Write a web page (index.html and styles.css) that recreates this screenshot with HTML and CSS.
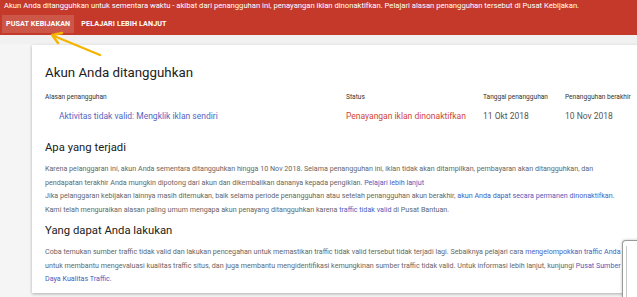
FILE: index.html
```html
<!DOCTYPE html>
<html lang="id">
<head>
<meta charset="utf-8">
<link rel="stylesheet" href="styles.css">
</head>
<body>
<header class="banner">
  <p class="banner-msg">Akun Anda ditangguhkan untuk sementara waktu - akibat dari penangguhan ini, penayangan iklan dinonaktifkan. Pelajari alasan penangguhan tersebut di Pusat Kebijakan.</p>
  <div class="banner-actions">
    <span class="banner-btn active">PUSAT KEBIJAKAN</span>
    <span class="banner-btn">PELAJARI LEBIH LANJUT</span>
  </div>
</header>
<div class="strip"></div>
<main class="page">
  <section class="card">
    <h1 class="title">Akun Anda ditangguhkan</h1>
    <div class="info">
      <div class="label">Alasan penangguhan</div>
      <div class="label">Status</div>
      <div class="label">Tanggal penangguhan</div>
      <div class="label">Penangguhan berakhir</div>
      <div class="value link indent">Aktivitas tidak valid: Mengklik iklan sendiri</div>
      <div class="value red">Penayangan iklan dinonaktifkan</div>
      <div class="value">11 Okt 2018</div>
      <div class="value">10 Nov 2018</div>
    </div>
    <h2 class="heading">Apa yang terjadi</h2>
    <p class="para">Karena pelanggaran ini, akun Anda sementara ditangguhkan hingga 10 Nov 2018. Selama penangguhan ini, iklan tidak akan ditampilkan, pembayaran akan ditangguhkan, dan<br>pendapatan terakhir Anda mungkin dipotong dari akun dan dikembalikan dananya kepada pengiklan. <span class="link">Pelajari lebih lanjut</span></p>
    <p class="para">Jika pelanggaran kebijakan lainnya masih ditemukan, baik selama periode penangguhan atau setelah penangguhan akun berakhir, <span class="link">akun Anda dapat secara permanen dinonaktifkan.</span><br>Kami telah menguraikan alasan paling umum mengapa akun penayang ditangguhkan karena <span class="link">traffic tidak valid</span> di Pusat Bantuan.</p>
    <h2 class="heading second">Yang dapat Anda lakukan</h2>
    <p class="para">Coba temukan sumber traffic tidak valid dan lakukan pencegahan untuk memastikan traffic tidak valid tersebut tidak terjadi lagi. Sebaiknya pelajari cara <span class="link">mengelompokkan traffic Anda</span><br>untuk membantu mengevaluasi kualitas traffic situs, dan juga membantu mengidentifikasi kemungkinan sumber traffic tidak valid. Untuk informasi lebih lanjut, kunjungi <span class="link">Pusat Sumber</span><br><span class="link">Daya Kualitas Traffic</span>.</p>
  </section>
</main>
<div class="widget"><div class="widget-inner"></div></div>
<svg class="arrow" width="70" height="40" viewBox="0 0 70 40">
  <line x1="58" y1="27" x2="12" y2="8" stroke="#f4b400" stroke-width="2.4" stroke-linecap="round"/>
  <polyline points="20,5 10,7 16,15" fill="none" stroke="#f4b400" stroke-width="2.4" stroke-linecap="round" stroke-linejoin="round"/>
</svg>
</body>
</html>
```
FILE: styles.css
```css
html, body {
  margin: 0;
  padding: 0;
}
body {
  background: #f5f5f5;
  font-family: Roboto, "Liberation Sans", sans-serif;
  width: 637px;
  height: 297px;
  overflow: hidden;
  position: relative;
}
.banner {
  background: #c5392b;
  color: #fff;
  height: 35px;
}
.banner-msg {
  margin: 0;
  padding: 1px 0 0 4px;
  font-size: 7.65px;
  line-height: 10px;
  white-space: nowrap;
}
.banner-actions {
  display: flex;
  margin-top: 4px;
  padding-left: 2px;
}
.banner-btn {
  font-size: 7.2px;
  font-weight: 700;
  line-height: 18px;
  padding: 0 4px;
  margin-right: 3px;
  letter-spacing: 0.1px;
}
.banner-btn.active {
  background: #cc5749;
}
.strip {
  height: 9px;
  background: #f1f1f1;
}
.page {
  padding-left: 32px;
  padding-top: 1px;
}
.card {
  background: #fff;
  width: 700px;
  height: 248px;
  padding: 0 0 0 13px;
  box-shadow: 0 1px 3px rgba(0, 0, 0, 0.3);
  overflow: hidden;
}
.title {
  margin: 0;
  padding-top: 19px;
  font-size: 13.3px;
  font-weight: 400;
  line-height: 18px;
  color: #212121;
}
.info {
  display: grid;
  grid-template-columns: 301px 137px 82px auto;
  margin-top: 10px;
  white-space: nowrap;
}
.label {
  font-size: 6.6px;
  line-height: 10px;
  color: #333;
}
.value {
  font-size: 8.5px;
  line-height: 12px;
  margin-top: 8px;
  color: #555;
}
.indent {
  padding-left: 14px;
}
.link {
  color: #4b5dbd;
}
.value.link {
  color: #5566c2;
}
.red {
  color: #d0453a;
}
.heading {
  margin: 18px 0 0;
  font-size: 11.3px;
  font-weight: 400;
  line-height: 15px;
  color: #212121;
}
.heading.second {
  margin-top: 7px;
}
.para {
  margin: 7px 0 0;
  font-size: 7.15px;
  line-height: 13.5px;
  color: #666;
  white-space: nowrap;
}
.para + .para {
  margin-top: 0;
}
.widget {
  position: absolute;
  left: 622px;
  top: 240px;
  width: 40px;
  height: 56px;
  background: #fff;
  border: 1px solid #9a9a9a;
  border-bottom: none;
  border-radius: 4px 0 0 0;
  box-shadow: 0 0 3px rgba(0, 0, 0, 0.25);
}
.widget-inner {
  margin: 5px 0 0 3px;
  height: 51px;
  border-left: 1px solid #c8c8c8;
}
.arrow {
  position: absolute;
  left: 42px;
  top: 28px;
}
```
